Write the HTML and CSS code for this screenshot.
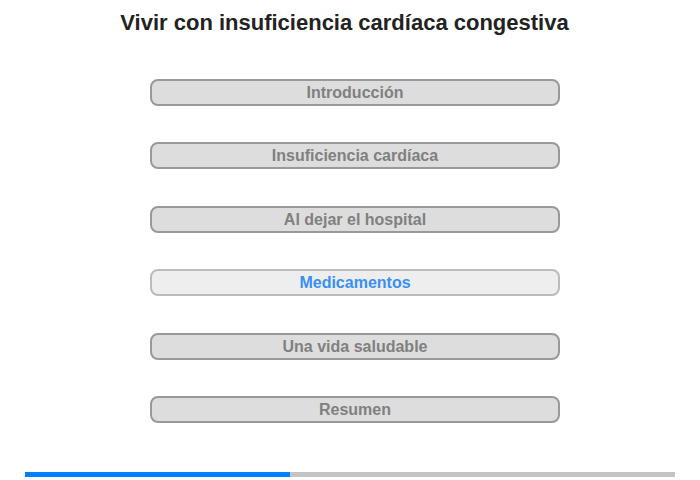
FILE: index.html
```html
<!DOCTYPE html>
<html>
<head>
    <meta charset="utf-8">
    <title>Vivir con insuficiencia cardíaca congestiva</title>
    <link rel="stylesheet" href="styles.css">
</head>
<body>
    <div class="lesson">
        <h1>Vivir con insuficiencia cardíaca congestiva</h1>

        <!-- menú de capítulos -->
        <div class="menu">
            <div class="item">Introducción</div>
            <div class="item">Insuficiencia cardíaca</div>
            <div class="item">Al dejar el hospital</div>
            <div class="item active">Medicamentos</div>
            <div class="item">Una vida saludable</div>
            <div class="item">Resumen</div>
        </div>

        <!-- barra de progreso -->
        <div class="progress">
            <div class="progress-fill" style="width: 40.8%"></div>
        </div>
    </div>
</body>
</html>
```

FILE: styles.css
```css
body { margin: 0; font-family: "Liberation Sans", Arial, sans-serif; background: #fff; }
.lesson { width: 700px; height: 480px; position: relative; }
h1 { margin: 0; padding: 9px 11px 0 0; font-size: 22px; line-height: 28px; text-align: center; color: #222; }
.menu { display: flex; flex-direction: column; gap: 36.4px; width: 410px; margin: 42px 0 0 150px; }
.item { box-sizing: border-box; height: 27px; border: 2px solid #999; border-radius: 8px; background: #ddd; color: #808080; font-size: 16px; font-weight: bold; line-height: 23px; text-align: center; }
.item.active { background: #eee; border-color: #bbb; color: #3a8ef6; }
.progress { position: absolute; left: 25px; top: 472px; width: 650px; height: 5px; background: #c4c4c4; }
.progress-fill { height: 100%; background: #0080ff; }
```
